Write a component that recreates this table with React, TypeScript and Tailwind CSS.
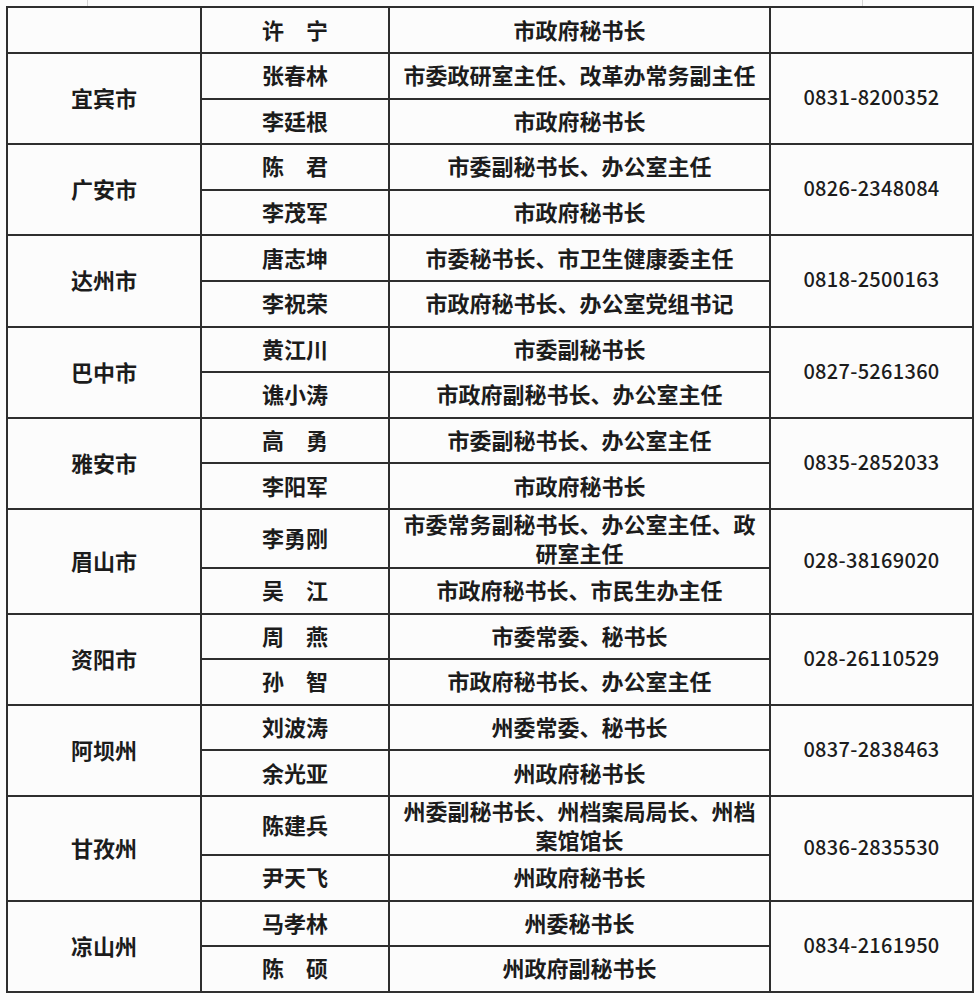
import React from "react";

type Group = {
  city: string;
  phone: string;
  rows: { name: string; title: string[] }[];
};

const groups: Group[] = [
  {
    city: "宜宾市",
    phone: "0831-8200352",
    rows: [
      { name: "张春林", title: ["市委政研室主任、改革办常务副主任"] },
      { name: "李廷根", title: ["市政府秘书长"] },
    ],
  },
  {
    city: "广安市",
    phone: "0826-2348084",
    rows: [
      { name: "陈　君", title: ["市委副秘书长、办公室主任"] },
      { name: "李茂军", title: ["市政府秘书长"] },
    ],
  },
  {
    city: "达州市",
    phone: "0818-2500163",
    rows: [
      { name: "唐志坤", title: ["市委秘书长、市卫生健康委主任"] },
      { name: "李祝荣", title: ["市政府秘书长、办公室党组书记"] },
    ],
  },
  {
    city: "巴中市",
    phone: "0827-5261360",
    rows: [
      { name: "黄江川", title: ["市委副秘书长"] },
      { name: "谯小涛", title: ["市政府副秘书长、办公室主任"] },
    ],
  },
  {
    city: "雅安市",
    phone: "0835-2852033",
    rows: [
      { name: "高　勇", title: ["市委副秘书长、办公室主任"] },
      { name: "李阳军", title: ["市政府秘书长"] },
    ],
  },
  {
    city: "眉山市",
    phone: "028-38169020",
    rows: [
      { name: "李勇刚", title: ["市委常务副秘书长、办公室主任、政", "研室主任"] },
      { name: "吴　江", title: ["市政府秘书长、市民生办主任"] },
    ],
  },
  {
    city: "资阳市",
    phone: "028-26110529",
    rows: [
      { name: "周　燕", title: ["市委常委、秘书长"] },
      { name: "孙　智", title: ["市政府秘书长、办公室主任"] },
    ],
  },
  {
    city: "阿坝州",
    phone: "0837-2838463",
    rows: [
      { name: "刘波涛", title: ["州委常委、秘书长"] },
      { name: "余光亚", title: ["州政府秘书长"] },
    ],
  },
  {
    city: "甘孜州",
    phone: "0836-2835530",
    rows: [
      { name: "陈建兵", title: ["州委副秘书长、州档案局局长、州档", "案馆馆长"] },
      { name: "尹天飞", title: ["州政府秘书长"] },
    ],
  },
  {
    city: "凉山州",
    phone: "0834-2161950",
    rows: [
      { name: "马孝林", title: ["州委秘书长"] },
      { name: "陈　硕", title: ["州政府副秘书长"] },
    ],
  },
];

const cell =
  "flex flex-col items-center justify-center text-center border-r-2 border-b-2 border-[#2e2e2e]";

export default function App() {
  return (
    <div
      className="w-[980px] h-[1000px] bg-[#fcfcfc] text-[#1c1c1c] text-[22px] font-bold leading-[26px]"
      style={{ fontFamily: '"Noto Sans CJK SC", "Noto Sans", sans-serif' }}
    >
      {/* page edges peeking above the table */}
      <div className="flex h-[6px]">
        <div className="w-[87px]" />
        <div className="w-px bg-[#d4d4d4]" />
        <div className="w-[774px]" />
        <div className="w-px bg-[#d4d4d4]" />
      </div>

      <div className="ml-[6px] w-[968px] grid grid-cols-[194px_188px_381px_203px] border-l-2 border-t-2 border-[#2e2e2e]">
        <div className={`${cell} h-[46px]`} />
        <div className={`${cell} h-[46px] pb-[3px]`}>许　宁</div>
        <div className={`${cell} h-[46px] pb-[3px]`}>市政府秘书长</div>
        <div className={`${cell} h-[46px]`} />

        {groups.map((g) => {
          const tall = g.rows[0].title.length > 1;
          return (
            <React.Fragment key={g.city}>
              <div className={`${cell} row-span-2 pb-[3px]`}>{g.city}</div>
              <div className={`${cell} pb-[3px] ${tall ? "h-[59px]" : "h-[45.6px]"}`}>
                {g.rows[0].name}
              </div>
              <div
                className={`${cell} ${tall ? "h-[59px] leading-[29px]" : "h-[45.6px] pb-[3px]"}`}
              >
                {g.rows[0].title.map((line) => (
                  <span key={line} className="block">
                    {line}
                  </span>
                ))}
              </div>
              <div
                className={`${cell} row-span-2 pb-[3px] text-[20px] font-medium tracking-[0.3px]`}
              >
                {g.phone}
              </div>
              <div className={`${cell} h-[45.6px] pb-[3px]`}>{g.rows[1].name}</div>
              <div className={`${cell} h-[45.6px] pb-[3px]`}>{g.rows[1].title[0]}</div>
            </React.Fragment>
          );
        })}
      </div>
    </div>
  );
}
